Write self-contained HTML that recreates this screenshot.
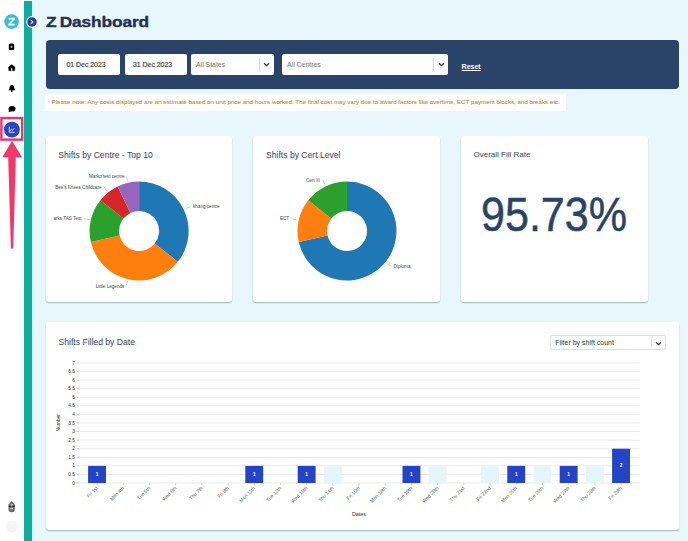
<!DOCTYPE html>
<html><head><meta charset="utf-8">
<style>
*{margin:0;padding:0;box-sizing:border-box}
html,body{width:688px;height:541px;overflow:hidden;background:#e7f7fc;font-family:"Liberation Sans",sans-serif}
.abs{position:absolute}
#side{left:0;top:0;width:24px;height:541px;background:#fff}
#teal{left:24px;top:1px;width:8px;height:540px;background:#0fac9e}
#tealedge{left:32px;top:1px;width:1px;height:540px;background:#d2f2f2}
#title{left:45.6px;top:13.9px;font-size:14.8px;font-weight:bold;color:#1f2f55;white-space:nowrap;transform:scaleX(1.17);transform-origin:0 0;word-spacing:-1.3px;letter-spacing:-0.1px;-webkit-text-stroke:0.35px #1f2f55}
#filter{left:46px;top:39.5px;width:633px;height:49.5px;background:#2a4368;border-radius:4px}
.inp{background:#fff;border-radius:2px;height:20.5px;top:54px;font-size:6.9px;color:#3a3a3a;line-height:22px;white-space:nowrap;-webkit-text-stroke:0.15px #3a3a3a}
.sel{color:#808080;-webkit-text-stroke:0.1px #808080}
.sel .div{position:absolute;top:4px;width:1px;height:12.5px;background:#d8d8d8}
.chev{position:absolute;top:7px;width:6px;height:6px}
#reset{left:461.6px;top:62.6px;text-decoration-thickness:0.7px;text-underline-offset:0.6px;font-size:7px;font-weight:bold;color:#fff;text-decoration:underline;white-space:nowrap}
#note{left:45px;top:94.4px;width:520.5px;height:16.8px;background:#fdfdfc;font-size:6.21px;color:#bf8a30;line-height:15px;-webkit-text-stroke:0.06px #bf8a30;padding-left:6.6px;white-space:nowrap}
.card{background:#fff;border-radius:3px;box-shadow:0 1px 1.5px rgba(0,0,0,.28)}
.ctitle{position:absolute;font-size:8.6px;color:#37425e;white-space:nowrap}
</style></head><body>
<div id="side" class="abs"></div>
<div id="teal" class="abs"></div>
<div id="tealedge" class="abs"></div>
<div id="title" class="abs">Z Dashboard</div>

<div id="filter" class="abs"></div>
<div class="abs inp" style="left:58px;width:62px;padding-left:8.5px">01 Dec 2023</div>
<div class="abs inp" style="left:125px;width:62px;padding-left:8px">31 Dec 2023</div>
<div class="abs inp sel" style="left:191px;width:83px;padding-left:5px">All States<span class="div" style="left:68px"></span></div>
<div class="abs inp sel" style="left:282px;width:166px;padding-left:5px">All Centres<span class="div" style="left:151px"></span></div>
<div id="reset" class="abs">Reset</div>
<div id="note" class="abs">Please note: Any costs displayed are an estimate based on unit price and hours worked. The final cost may vary due to award factors like overtime, ECT payment blocks, and breaks etc.</div>

<div class="abs card" style="left:45.5px;top:136px;width:186.9px;height:166px"></div>
<div class="abs card" style="left:253px;top:136px;width:187.1px;height:166px"></div>
<div class="abs card" style="left:460.8px;top:136px;width:187.3px;height:166px"></div>
<div class="abs card" style="left:45.7px;top:321.6px;width:633.5px;height:208px"></div>

<div class="ctitle" style="left:58.3px;top:150.2px">Shifts by Centre - Top 10</div>
<div class="ctitle" style="left:266px;top:150.2px">Shifts by Cert Level</div>
<div class="ctitle" style="left:473.5px;top:150px;font-size:8px">Overall Fill Rate</div>
<div class="ctitle" style="left:58.5px;top:337.2px">Shifts Filled by Date</div>
<div class="abs" style="left:480.5px;top:187.4px;font-size:48px;color:#2a4368;white-space:nowrap;-webkit-text-stroke:0.5px #2a4368;transform:scaleX(0.897);transform-origin:0 0">95.73%</div>

<svg class="abs" style="left:263px;top:61.5px" width="7" height="5" viewBox="0 0 7 5"><path d="M1,1.2L3.5,3.6L6,1.2" stroke="#333" stroke-width="1.3" fill="none"/></svg>
<svg class="abs" style="left:437.5px;top:61.5px" width="7" height="5" viewBox="0 0 7 5"><path d="M1,1.2L3.5,3.6L6,1.2" stroke="#333" stroke-width="1.3" fill="none"/></svg>
<div class="abs" style="left:550.2px;top:334.8px;width:116px;height:15.6px;border:1px solid #dedede;border-radius:2px;background:#fff;font-size:7px;color:#333;line-height:13.6px;padding-left:4px;white-space:nowrap">Filter by shift count<span style="position:absolute;left:100px;top:3px;width:1px;height:8px;background:#ddd"></span></div>
<svg class="abs" style="left:655px;top:340.5px" width="7" height="5" viewBox="0 0 7 5"><path d="M1,1.2L3.5,3.6L6,1.2" stroke="#333" stroke-width="1.2" fill="none"/></svg>
<svg class="abs" style="left:0;top:0" width="688" height="541" viewBox="0 0 688 541">
<!-- donut 1 -->
<path d="M139.10,181.50A49.5,49.5 0 0 1 177.80,261.86L154.74,243.47A20,20 0 0 0 139.10,211.00Z" fill="#1f77b4"/>
<path d="M177.80,261.86A49.5,49.5 0 0 1 90.84,242.01L119.60,235.45A20,20 0 0 0 154.74,243.47Z" fill="#ff7f0e"/>
<path d="M90.84,242.01A49.5,49.5 0 0 1 100.40,200.14L123.46,218.53A20,20 0 0 0 119.60,235.45Z" fill="#2ca02c"/>
<path d="M100.40,200.14A49.5,49.5 0 0 1 117.62,186.40L130.42,212.98A20,20 0 0 0 123.46,218.53Z" fill="#d62728"/>
<path d="M117.62,186.40A49.5,49.5 0 0 1 139.10,181.50L139.10,211.00A20,20 0 0 0 130.42,212.98Z" fill="#9467bd"/>
<!-- donut 2 -->
<path d="M347.00,181.50A49.5,49.5 0 1 1 298.74,242.01L327.50,235.45A20,20 0 1 0 347.00,211.00Z" fill="#1f77b4"/>
<path d="M298.74,242.01A49.5,49.5 0 0 1 308.30,200.14L331.36,218.53A20,20 0 0 0 327.50,235.45Z" fill="#ff7f0e"/>
<path d="M308.30,200.14A49.5,49.5 0 0 1 347.00,181.50L347.00,211.00A20,20 0 0 0 331.36,218.53Z" fill="#2ca02c"/>
<style>.t{font-family:"Liberation Sans",sans-serif;font-size:4.6px;fill:#333}.pl{font-family:"Liberation Sans",sans-serif;font-size:4.6px;fill:#444}</style>
<defs><clipPath id="c1"><rect x="53.5" y="140" width="180" height="160"/></clipPath></defs>
<g clip-path="url(#c1)">
<text x="124.5" y="177.6" text-anchor="end" class="pl">Marko test centre</text>
<text x="101.5" y="188.5" text-anchor="end" class="pl">Bee's Knees Childcare</text>
<text x="81.5" y="220.2" text-anchor="end" class="pl">Sparks TAS Test</text>
<text x="193" y="208" class="pl">khang centre</text>
<text x="124.3" y="287.5" text-anchor="end" class="pl">Little Legends</text>
</g>
<text x="319.8" y="181.7" text-anchor="end" class="pl">Cert III</text>
<text x="289.1" y="220.3" text-anchor="end" class="pl">ECT</text>
<text x="393.6" y="267.7" class="pl">Diploma</text>
<g stroke="#9a9a9a" stroke-width="0.5" fill="none">
<path d="M126.4,176.6L128.1,181.7"/><path d="M103.9,186.8L107.5,191.9"/><path d="M84,218.5L90,220"/>
<path d="M185.5,208.7L190.5,206.7"/><path d="M127.4,280.9L126.5,285"/>
<path d="M322.7,180L325,184.6"/><path d="M291.3,218.6L297.3,220"/><path d="M386.7,263.2L391.3,266"/>
</g>
<line x1="80" y1="483.00" x2="639.7" y2="483.00" stroke="#ebebeb" stroke-width="1"/>
<line x1="76.8" y1="483.00" x2="79" y2="483.00" stroke="#999" stroke-width="0.6"/>
<text x="75" y="484.60" text-anchor="end" class="t" style="font-size:4.8px">0</text>
<line x1="80" y1="474.43" x2="639.7" y2="474.43" stroke="#ebebeb" stroke-width="1"/>
<line x1="76.8" y1="474.43" x2="79" y2="474.43" stroke="#999" stroke-width="0.6"/>
<text x="75" y="476.03" text-anchor="end" class="t" style="font-size:4.8px">0.5</text>
<line x1="80" y1="465.86" x2="639.7" y2="465.86" stroke="#ebebeb" stroke-width="1"/>
<line x1="76.8" y1="465.86" x2="79" y2="465.86" stroke="#999" stroke-width="0.6"/>
<text x="75" y="467.46" text-anchor="end" class="t" style="font-size:4.8px">1</text>
<line x1="80" y1="457.29" x2="639.7" y2="457.29" stroke="#ebebeb" stroke-width="1"/>
<line x1="76.8" y1="457.29" x2="79" y2="457.29" stroke="#999" stroke-width="0.6"/>
<text x="75" y="458.89" text-anchor="end" class="t" style="font-size:4.8px">1.5</text>
<line x1="80" y1="448.71" x2="639.7" y2="448.71" stroke="#ebebeb" stroke-width="1"/>
<line x1="76.8" y1="448.71" x2="79" y2="448.71" stroke="#999" stroke-width="0.6"/>
<text x="75" y="450.31" text-anchor="end" class="t" style="font-size:4.8px">2</text>
<line x1="80" y1="440.14" x2="639.7" y2="440.14" stroke="#ebebeb" stroke-width="1"/>
<line x1="76.8" y1="440.14" x2="79" y2="440.14" stroke="#999" stroke-width="0.6"/>
<text x="75" y="441.74" text-anchor="end" class="t" style="font-size:4.8px">2.5</text>
<line x1="80" y1="431.57" x2="639.7" y2="431.57" stroke="#ebebeb" stroke-width="1"/>
<line x1="76.8" y1="431.57" x2="79" y2="431.57" stroke="#999" stroke-width="0.6"/>
<text x="75" y="433.17" text-anchor="end" class="t" style="font-size:4.8px">3</text>
<line x1="80" y1="423.00" x2="639.7" y2="423.00" stroke="#ebebeb" stroke-width="1"/>
<line x1="76.8" y1="423.00" x2="79" y2="423.00" stroke="#999" stroke-width="0.6"/>
<text x="75" y="424.60" text-anchor="end" class="t" style="font-size:4.8px">3.5</text>
<line x1="80" y1="414.43" x2="639.7" y2="414.43" stroke="#ebebeb" stroke-width="1"/>
<line x1="76.8" y1="414.43" x2="79" y2="414.43" stroke="#999" stroke-width="0.6"/>
<text x="75" y="416.03" text-anchor="end" class="t" style="font-size:4.8px">4</text>
<line x1="80" y1="405.86" x2="639.7" y2="405.86" stroke="#ebebeb" stroke-width="1"/>
<line x1="76.8" y1="405.86" x2="79" y2="405.86" stroke="#999" stroke-width="0.6"/>
<text x="75" y="407.46" text-anchor="end" class="t" style="font-size:4.8px">4.5</text>
<line x1="80" y1="397.29" x2="639.7" y2="397.29" stroke="#ebebeb" stroke-width="1"/>
<line x1="76.8" y1="397.29" x2="79" y2="397.29" stroke="#999" stroke-width="0.6"/>
<text x="75" y="398.89" text-anchor="end" class="t" style="font-size:4.8px">5</text>
<line x1="80" y1="388.71" x2="639.7" y2="388.71" stroke="#ebebeb" stroke-width="1"/>
<line x1="76.8" y1="388.71" x2="79" y2="388.71" stroke="#999" stroke-width="0.6"/>
<text x="75" y="390.31" text-anchor="end" class="t" style="font-size:4.8px">5.5</text>
<line x1="80" y1="380.14" x2="639.7" y2="380.14" stroke="#ebebeb" stroke-width="1"/>
<line x1="76.8" y1="380.14" x2="79" y2="380.14" stroke="#999" stroke-width="0.6"/>
<text x="75" y="381.74" text-anchor="end" class="t" style="font-size:4.8px">6</text>
<line x1="80" y1="371.57" x2="639.7" y2="371.57" stroke="#ebebeb" stroke-width="1"/>
<line x1="76.8" y1="371.57" x2="79" y2="371.57" stroke="#999" stroke-width="0.6"/>
<text x="75" y="373.17" text-anchor="end" class="t" style="font-size:4.8px">6.5</text>
<line x1="80" y1="363.00" x2="639.7" y2="363.00" stroke="#ebebeb" stroke-width="1"/>
<line x1="76.8" y1="363.00" x2="79" y2="363.00" stroke="#999" stroke-width="0.6"/>
<text x="75" y="364.60" text-anchor="end" class="t" style="font-size:4.8px">7</text>
<rect x="88.10" y="465.86" width="17.9" height="17.14" fill="#2443c6"/>
<text x="97.05" y="476.03" text-anchor="middle" class="t" style="fill:#fff;font-weight:bold;font-size:4.8px">1</text>
<line x1="97.05" y1="483.3" x2="97.05" y2="484.8" stroke="#999" stroke-width="0.6"/>
<text transform="translate(98.25,488.5) rotate(-45)" text-anchor="end" class="t" style="font-size:4.9px;fill:#5a5a5a">Fri 1st</text>
<line x1="123.25" y1="483.3" x2="123.25" y2="484.8" stroke="#999" stroke-width="0.6"/>
<text transform="translate(124.45,488.5) rotate(-45)" text-anchor="end" class="t" style="font-size:4.9px;fill:#5a5a5a">Mon 4th</text>
<line x1="149.45" y1="483.3" x2="149.45" y2="484.8" stroke="#999" stroke-width="0.6"/>
<text transform="translate(150.65,488.5) rotate(-45)" text-anchor="end" class="t" style="font-size:4.9px;fill:#5a5a5a">Tue 5th</text>
<line x1="175.65" y1="483.3" x2="175.65" y2="484.8" stroke="#999" stroke-width="0.6"/>
<text transform="translate(176.85,488.5) rotate(-45)" text-anchor="end" class="t" style="font-size:4.9px;fill:#5a5a5a">Wed 6th</text>
<line x1="201.85" y1="483.3" x2="201.85" y2="484.8" stroke="#999" stroke-width="0.6"/>
<text transform="translate(203.05,488.5) rotate(-45)" text-anchor="end" class="t" style="font-size:4.9px;fill:#5a5a5a">Thu 7th</text>
<line x1="228.05" y1="483.3" x2="228.05" y2="484.8" stroke="#999" stroke-width="0.6"/>
<text transform="translate(229.25,488.5) rotate(-45)" text-anchor="end" class="t" style="font-size:4.9px;fill:#5a5a5a">Fri 8th</text>
<rect x="245.30" y="465.86" width="17.9" height="17.14" fill="#2443c6"/>
<text x="254.25" y="476.03" text-anchor="middle" class="t" style="fill:#fff;font-weight:bold;font-size:4.8px">1</text>
<line x1="254.25" y1="483.3" x2="254.25" y2="484.8" stroke="#999" stroke-width="0.6"/>
<text transform="translate(255.45,488.5) rotate(-45)" text-anchor="end" class="t" style="font-size:4.9px;fill:#5a5a5a">Mon 11th</text>
<line x1="280.45" y1="483.3" x2="280.45" y2="484.8" stroke="#999" stroke-width="0.6"/>
<text transform="translate(281.65,488.5) rotate(-45)" text-anchor="end" class="t" style="font-size:4.9px;fill:#5a5a5a">Tue 12th</text>
<rect x="297.70" y="465.86" width="17.9" height="17.14" fill="#2443c6"/>
<text x="306.65" y="476.03" text-anchor="middle" class="t" style="fill:#fff;font-weight:bold;font-size:4.8px">1</text>
<line x1="306.65" y1="483.3" x2="306.65" y2="484.8" stroke="#999" stroke-width="0.6"/>
<text transform="translate(307.85,488.5) rotate(-45)" text-anchor="end" class="t" style="font-size:4.9px;fill:#5a5a5a">Wed 13th</text>
<rect x="323.90" y="465.86" width="17.9" height="17.14" fill="#e4f6fa"/>
<line x1="332.85" y1="483.3" x2="332.85" y2="484.8" stroke="#999" stroke-width="0.6"/>
<text transform="translate(334.05,488.5) rotate(-45)" text-anchor="end" class="t" style="font-size:4.9px;fill:#5a5a5a">Thu 14th</text>
<line x1="359.05" y1="483.3" x2="359.05" y2="484.8" stroke="#999" stroke-width="0.6"/>
<text transform="translate(360.25,488.5) rotate(-45)" text-anchor="end" class="t" style="font-size:4.9px;fill:#5a5a5a">Fri 15th</text>
<line x1="385.25" y1="483.3" x2="385.25" y2="484.8" stroke="#999" stroke-width="0.6"/>
<text transform="translate(386.45,488.5) rotate(-45)" text-anchor="end" class="t" style="font-size:4.9px;fill:#5a5a5a">Mon 18th</text>
<rect x="402.50" y="465.86" width="17.9" height="17.14" fill="#2443c6"/>
<text x="411.45" y="476.03" text-anchor="middle" class="t" style="fill:#fff;font-weight:bold;font-size:4.8px">1</text>
<line x1="411.45" y1="483.3" x2="411.45" y2="484.8" stroke="#999" stroke-width="0.6"/>
<text transform="translate(412.65,488.5) rotate(-45)" text-anchor="end" class="t" style="font-size:4.9px;fill:#5a5a5a">Tue 19th</text>
<rect x="428.70" y="465.86" width="17.9" height="17.14" fill="#e4f6fa"/>
<line x1="437.65" y1="483.3" x2="437.65" y2="484.8" stroke="#999" stroke-width="0.6"/>
<text transform="translate(438.85,488.5) rotate(-45)" text-anchor="end" class="t" style="font-size:4.9px;fill:#5a5a5a">Wed 20th</text>
<line x1="463.85" y1="483.3" x2="463.85" y2="484.8" stroke="#999" stroke-width="0.6"/>
<text transform="translate(465.05,488.5) rotate(-45)" text-anchor="end" class="t" style="font-size:4.9px;fill:#5a5a5a">Thu 21st</text>
<rect x="481.10" y="465.86" width="17.9" height="17.14" fill="#e4f6fa"/>
<line x1="490.05" y1="483.3" x2="490.05" y2="484.8" stroke="#999" stroke-width="0.6"/>
<text transform="translate(491.25,488.5) rotate(-45)" text-anchor="end" class="t" style="font-size:4.9px;fill:#5a5a5a">Fri 22nd</text>
<rect x="507.30" y="465.86" width="17.9" height="17.14" fill="#2443c6"/>
<text x="516.25" y="476.03" text-anchor="middle" class="t" style="fill:#fff;font-weight:bold;font-size:4.8px">1</text>
<line x1="516.25" y1="483.3" x2="516.25" y2="484.8" stroke="#999" stroke-width="0.6"/>
<text transform="translate(517.45,488.5) rotate(-45)" text-anchor="end" class="t" style="font-size:4.9px;fill:#5a5a5a">Mon 25th</text>
<rect x="533.50" y="465.86" width="17.9" height="17.14" fill="#e4f6fa"/>
<line x1="542.45" y1="483.3" x2="542.45" y2="484.8" stroke="#999" stroke-width="0.6"/>
<text transform="translate(543.65,488.5) rotate(-45)" text-anchor="end" class="t" style="font-size:4.9px;fill:#5a5a5a">Tue 26th</text>
<rect x="559.70" y="465.86" width="17.9" height="17.14" fill="#2443c6"/>
<text x="568.65" y="476.03" text-anchor="middle" class="t" style="fill:#fff;font-weight:bold;font-size:4.8px">1</text>
<line x1="568.65" y1="483.3" x2="568.65" y2="484.8" stroke="#999" stroke-width="0.6"/>
<text transform="translate(569.85,488.5) rotate(-45)" text-anchor="end" class="t" style="font-size:4.9px;fill:#5a5a5a">Wed 27th</text>
<rect x="585.90" y="465.86" width="17.9" height="17.14" fill="#e4f6fa"/>
<line x1="594.85" y1="483.3" x2="594.85" y2="484.8" stroke="#999" stroke-width="0.6"/>
<text transform="translate(596.05,488.5) rotate(-45)" text-anchor="end" class="t" style="font-size:4.9px;fill:#5a5a5a">Thu 28th</text>
<rect x="612.10" y="448.71" width="17.9" height="34.29" fill="#2443c6"/>
<text x="621.05" y="467.46" text-anchor="middle" class="t" style="fill:#fff;font-weight:bold;font-size:4.8px">2</text>
<line x1="621.05" y1="483.3" x2="621.05" y2="484.8" stroke="#999" stroke-width="0.6"/>
<text transform="translate(622.25,488.5) rotate(-45)" text-anchor="end" class="t" style="font-size:4.9px;fill:#5a5a5a">Fri 29th</text>
<text transform="translate(59.8,422.7) rotate(-90)" text-anchor="middle" class="t" style="font-size:4.9px">Number</text>
<text x="359" y="516" text-anchor="middle" class="t" style="font-size:5.4px">Dates</text>
<!-- sidebar -->
<circle cx="11.6" cy="21.6" r="7.3" fill="#30c0dd"/>
<path d="M8.6,18.6H14.3L8.9,24.6H14.6" stroke="#fff" stroke-width="1.6" fill="none" stroke-linejoin="round"/>
<circle cx="32" cy="22" r="5.9" fill="#dff3ee"/>
<circle cx="32" cy="22" r="4.7" fill="#2b3aa8"/>
<path d="M31,20.2L32.9,22L31,23.8" stroke="#fff" stroke-width="1.1" fill="none"/>
<!-- bag -->
<path d="M10.2,43.4H12.8L14.2,44.8V49.2Q14.2,50 13.4,50H9.6Q8.8,50 8.8,49.2V44.8Z" fill="#000"/>
<path d="M11.5,45.6V48M10.3,46.8H12.7" stroke="#fff" stroke-width="0.6"/>
<!-- house -->
<path d="M11.7,64.6L15.1,67.3L14.6,70.7H8.9L8.4,67.3Z" fill="#000" stroke="#000" stroke-width="0.4" stroke-linejoin="round"/>
<rect x="11.1" y="68.2" width="1.2" height="2.5" fill="#fff"/>
<!-- bell -->
<path d="M11.9,85C13.6,85 14.2,86.6 14.3,88.3L15.3,90.2H8.5L9.5,88.3C9.6,86.6 10.2,85 11.9,85Z" fill="#000"/>
<circle cx="11.9" cy="91" r="0.9" fill="#000"/>
<!-- chat -->
<ellipse cx="12" cy="108.8" rx="3.5" ry="2.7" fill="#000"/>
<path d="M9.2,110L8.4,112.2L11,111.2Z" fill="#000"/>
<!-- highlight -->
<rect x="1.4" y="118" width="20.8" height="21.6" fill="none" stroke="#e9356e" stroke-width="2.4"/>
<circle cx="11.9" cy="129.6" r="7.9" fill="#2b45c4"/>
<path d="M9.3,126.6V132.3H14.7M9.9,130.9L11.4,129.2L12.6,130.3L14.4,128.1" stroke="#fff" stroke-width="0.8" fill="none"/>
<path d="M12,140.8L22,157.2H15.8L13.2,248.5H10.9L8.2,157.2H2.4Z" fill="#f1376c"/>
<!-- bottom icons -->
<path d="M11.7,501.3L14.8,504.6V509.2Q14.8,512.2 11.7,512.2Q8.5,512.2 8.5,509.2V504.6Z" fill="#6a6a6a"/>
<ellipse cx="11.7" cy="504.8" rx="1.3" ry="1" fill="#bdbdbd"/>
<rect x="8.8" y="505.9" width="2" height="1.2" fill="#1a1a1a"/><rect x="12.6" y="505.9" width="2" height="1.2" fill="#1a1a1a"/>
<ellipse cx="11.7" cy="508.4" rx="1.4" ry="0.9" fill="#c8c8c8"/>
<circle cx="11.7" cy="526.7" r="6" fill="#f4f4f4"/>
</svg>
</body></html>
